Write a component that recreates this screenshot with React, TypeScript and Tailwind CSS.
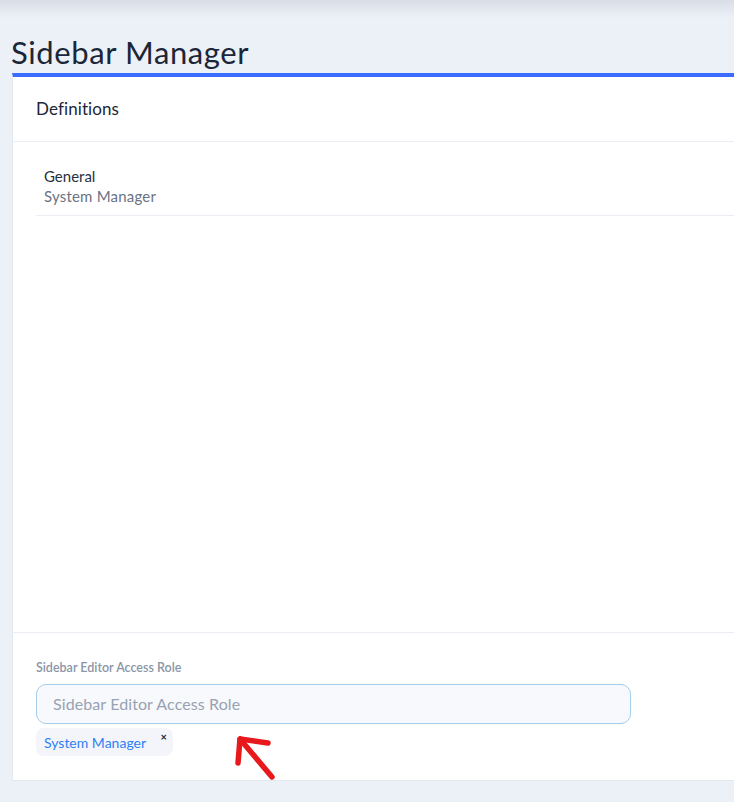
import React from 'react';

const font = { fontFamily: '"Lato", "Open Sans", sans-serif' };

const App: React.FC = () => {
  return (
    <div className="min-h-[802px] bg-[#ecf0f7] overflow-hidden" style={font}>
      {/* top shadow strip */}
      <div className="h-[18px] bg-gradient-to-b from-[#d9dde5] to-[#ecf0f7]" />

      <div className="pl-[11px] pt-[14px]">
        <h1 className="text-[31px] leading-[40px] text-[#1b2638] tracking-[0.6px]">Sidebar Manager</h1>
      </div>

      {/* card */}
      <div className="ml-[12px] mt-[1px] border-t-[4px] border-[#3a6cff] bg-white border-l border-b border-l-[#e3e7ef] border-b-[#e3e7ef] h-[708px] flex flex-col">
        <div className="h-[65px] flex items-center pl-[23px] border-b border-[#eceef5]">
          <span className="text-[17px] text-[#1b2638] tracking-[0.1px]">Definitions</span>
        </div>

        <div className="pl-[23px] pt-[24px] flex-1">
          <div className="border-b border-[#eceef5] pl-[8px] pb-[9px]">
            <div className="text-[15px] leading-[20px] text-[#27303f]">General</div>
            <div className="text-[15px] leading-[20px] text-[#6b7384] tracking-[0.2px]">System Manager</div>
          </div>
        </div>

        <div className="border-t border-[#eceef5] h-[148px] pl-[23px] pt-[27px]">
          <div className="text-[12.5px] font-semibold text-[#8c95a6] leading-[16px]">Sidebar Editor Access Role</div>
          <div className="mt-[8px] w-[595px] h-[40px] rounded-[10px] border border-[#a6cdec] bg-[#f7f9fc] flex items-center px-[16px]">
            <span className="text-[16px] text-[#98a2b3] tracking-[0.1px]">Sidebar Editor Access Role</span>
          </div>
          <div className="relative mt-[4px] w-[137px] h-[28px] rounded-[8px] bg-[#f3f5fa] flex items-center pl-[8px]">
            <span className="text-[14px] text-[#2f7ff5]">System Manager</span>
            <span className="absolute right-[6px] top-[1px] text-[11px] text-[#1b2638] font-bold">×</span>
          </div>
        </div>
      </div>

      {/* red annotation arrow */}
      <svg className="absolute left-[225px] top-[730px]" width="60" height="56" viewBox="0 0 60 56">
        <g stroke="#e8191c" strokeWidth="5.5" strokeLinecap="round" strokeLinejoin="round" fill="none">
          <path d="M15 9 L47 47" />
          <path d="M13 33 L15 9 L43 13" />
        </g>
      </svg>
    </div>
  );
};

export default App;
